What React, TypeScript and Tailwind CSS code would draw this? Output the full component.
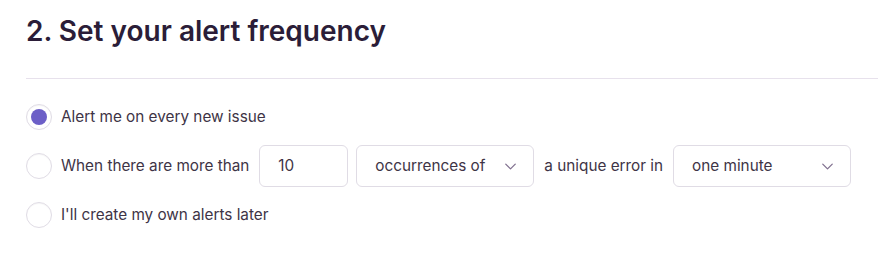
import { ChevronDown } from 'lucide-react';

type Option = {
  id: string;
  label: string;
};

const FONT = 'font-["Inter",sans-serif]';

function Radio({ checked }: { checked?: boolean }) {
  return (
    <span className="mr-[1px] flex h-[26px] w-[26px] shrink-0 items-center justify-center rounded-full border border-[#e0dce5] bg-white shadow-[inset_0_1px_1px_rgba(0,0,0,0.04)]">
      {checked && <span className="h-[16px] w-[16px] rounded-full bg-[#6c5fc7]" />}
    </span>
  );
}

function Select({ value }: { value: string }) {
  return (
    <div className="flex h-[42px] w-[178px] shrink-0 items-center justify-between rounded-md border border-[#e0dce5] bg-white pl-[18px] pr-[13px] text-[#3e3446]">
      <span>{value}</span>
      <ChevronDown className="h-[19px] w-[19px] text-[#80708f]" strokeWidth={1.6} />
    </div>
  );
}

const OPTIONS: Option[] = [
  { id: 'every', label: 'Alert me on every new issue' },
  { id: 'more', label: 'When there are more than' },
  { id: 'later', label: "I'll create my own alerts later" },
];

export default function App() {
  return (
    <div className={`min-h-[270px] w-[879px] bg-white pl-[26px] pr-[1px] ${FONT}`}>
      <h2 className="pt-[12px] pb-[28px] text-[28px] font-semibold leading-[38px] text-[#2b1d38]">
        2. Set your alert frequency
      </h2>
      <div className="border-t border-[#e7e1ec]" />
      <div className="mt-[17px] flex flex-col gap-[7px] text-[15.3px] text-[#3e3446]">
        <label className="flex h-[42px] items-center gap-[8px]">
          <Radio checked />
          <span>{OPTIONS[0].label}</span>
        </label>
        <label className="flex h-[42px] items-center gap-[8px]">
          <Radio />
          <span>{OPTIONS[1].label}</span>
          <div className="ml-[2px] flex h-[42px] w-[89px] shrink-0 items-center rounded-md border border-[#e0dce5] bg-white px-[18px]">
            10
          </div>
          <Select value="occurrences of" />
          <span className="ml-[2px] mr-[2px]">a unique error in</span>
          <Select value="one minute" />
        </label>
        <label className="flex h-[42px] items-center gap-[8px]">
          <Radio />
          <span>{OPTIONS[2].label}</span>
        </label>
      </div>
    </div>
  );
}
